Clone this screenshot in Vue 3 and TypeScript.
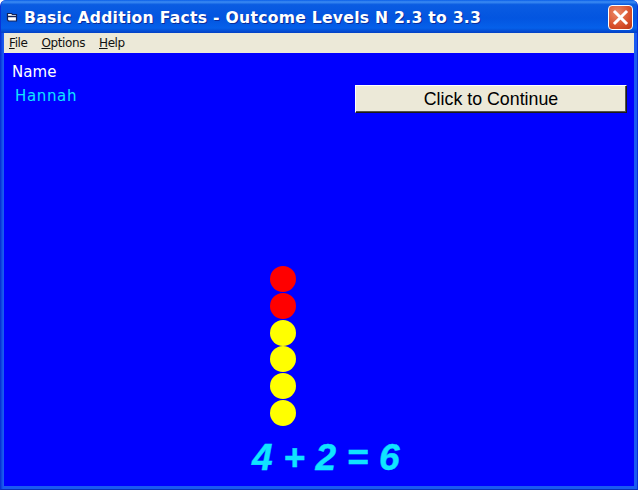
<script setup lang="ts">
const menus = [
  { key: 'F', rest: 'ile' },
  { key: 'O', rest: 'ptions' },
  { key: 'H', rest: 'elp' },
]
const beads = ['red', 'red', 'yellow', 'yellow', 'yellow', 'yellow']
</script>

<template>
  <div class="window">
    <header class="titlebar">
      <svg class="app-icon" width="16" height="16" viewBox="0 0 16 16">
        <path d="M1.5 4.5h4l1 1h4v6.5h-8l-1-1z" fill="#fff" stroke="#14245a" stroke-width="1.2" />
        <path d="M2 7.5h8.5" stroke="#14245a" stroke-width="1.4" />
      </svg>
      <span class="title">Basic Addition Facts - Outcome Levels N 2.3 to 3.3</span>
      <button class="close" aria-label="Close">
        <svg width="21" height="21" viewBox="0 0 21 21">
          <path d="M5 5l11 11M16 5L5 16" stroke="#fff" stroke-width="3" stroke-linecap="square" fill="none" />
        </svg>
      </button>
    </header>
    <nav class="menubar">
      <span v-for="m in menus" :key="m.key" class="menu"><u>{{ m.key }}</u>{{ m.rest }}</span>
    </nav>
    <main class="client">
      <section class="top">
        <div class="student">
          <div class="label">Name</div>
          <div class="name">Hannah</div>
        </div>
        <button class="continue">Click to Continue</button>
      </section>
      <section class="beads">
        <span v-for="(c, i) in beads" :key="i" class="bead" :class="c"></span>
      </section>
      <div class="equation">4 + 2 = 6</div>
    </main>
  </div>
</template>

<style scoped>
.window {
  width: 638px;
  height: 490px;
  box-sizing: border-box;
  display: flex;
  flex-direction: column;
  padding: 0 3px 3px;
  background: linear-gradient(90deg, #0a3fd8 0, #1a5af0 2px, #1a5af0 100%);
  border-left: 1px solid #0831d9;
  border-right: 1px solid #0831d9;
  border-bottom: 1px solid #0a2fb8;
  overflow: hidden;
  border-radius: 6px 6px 0 0;
}
.titlebar {
  height: 33px;
  margin: 0 -3px;
  padding: 0 4px 0 5px;
  display: flex;
  align-items: center;
  flex: none;
  background: linear-gradient(#0a5ee8 0, #3c8cf3 6%, #0a5ce2 14%, #0355e0 55%, #0560ea 85%, #0340c4 100%);
}
.app-icon {
  flex: none;
}
.title {
  margin: 3px 0 0 2px;
  color: #fff;
  font: bold 15.6px "DejaVu Sans", sans-serif;
  letter-spacing: 0.28px;
  white-space: nowrap;
  text-shadow: 1px 1px 0 #0a2d9a;
}
.close {
  margin: 1px 0 0 auto;
  width: 25px;
  height: 25px;
  padding: 0;
  display: flex;
  align-items: center;
  justify-content: center;
  border: 1px solid #fff;
  border-radius: 4px;
  background: radial-gradient(circle at 35% 30%, #ec8a68, #d8502c 60%, #b93414);
}
.menubar {
  height: 20px;
  flex: none;
  display: flex;
  align-items: center;
  gap: 14px;
  padding-left: 5px;
  background: #ece9d8;
  font: 12px "DejaVu Sans", sans-serif;
  letter-spacing: -0.4px;
  color: #111;
}
.client {
  flex: 1;
  display: flex;
  flex-direction: column;
  min-height: 0;
  background: #0000ff;
}
.top {
  display: flex;
  justify-content: space-between;
  align-items: flex-start;
  height: 203px;
  padding: 10px 7px 0 8px;
}
.label {
  color: #fff;
  font: 15px/18px "DejaVu Sans", sans-serif;
  letter-spacing: 0.1px;
}
.name {
  margin: 6px 0 0 3px;
  color: #10e4ff;
  font: 15px/18px "DejaVu Sans", sans-serif;
  letter-spacing: 0.65px;
}
.continue {
  width: 272px;
  height: 28px;
  margin-top: 22px;
  box-sizing: border-box;
  padding: 0;
  background: #ece9d8;
  color: #000;
  font: 17.8px "Liberation Sans", Arial, sans-serif;
  border: 1px solid;
  border-color: #fff #1a1a1a #1a1a1a #fff;
  box-shadow: inset -1px -1px 0 #55534a;
}
.beads {
  display: flex;
  flex-direction: column;
  align-items: center;
  width: 26px;
  margin-left: 266px;
  gap: 0.8px;
}
.bead {
  width: 26px;
  height: 26px;
  border-radius: 50%;
  flex: none;
}
.red {
  background: #ff0000;
}
.yellow {
  background: #ffff00;
}
.equation {
  margin: 10px 0 0 248px;
  color: #10e4ff;
  font: italic bold 37px/44px "Liberation Sans", Arial, sans-serif;
  letter-spacing: 0.2px;
  -webkit-text-stroke: 0.4px #10e4ff;
  white-space: pre;
}
</style>
